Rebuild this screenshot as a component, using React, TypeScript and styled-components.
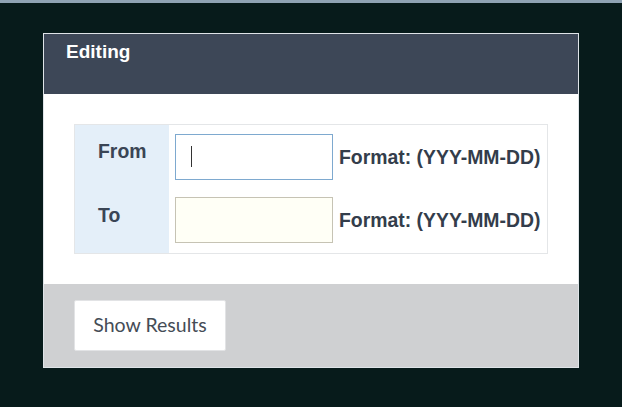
import React from "react";
import styled, { createGlobalStyle } from "styled-components";

const GlobalStyle = createGlobalStyle`
  html, body {
    margin: 0;
    padding: 0;
    background: #071b1b;
  }
  body {
    border-top: 3px solid #8fa3b4;
    min-height: 404px;
    font-family: "Liberation Sans", Arial, sans-serif;
  }
`;

const Page = styled.div`
  padding: 30px 43px 0 43px;
`;

const Panel = styled.div`
  width: 534px;
  border: 1px solid #dfe4e8;
  background: #ffffff;
`;

const Header = styled.div`
  height: 60px;
  box-sizing: border-box;
  padding: 6px 22px 0;
  background: #3d4757;
`;

const Title = styled.h2`
  margin: 0;
  font-size: 19px;
  line-height: 24px;
  font-weight: bold;
  color: #ffffff;
`;

const Body = styled.div`
  padding: 30px;
`;

const Table = styled.div`
  display: grid;
  grid-template-columns: 94px 1fr;
  border: 1px solid #e4e6e8;
`;

const LabelCell = styled.div<{ $top: number }>`
  background: #e4eff9;
  padding: ${(p) => p.$top}px 0 0 23px;
  height: 64px;
  box-sizing: border-box;
  font-family: "Liberation Sans", Arial, sans-serif;
  font-size: 19.4px;
  line-height: 22px;
  font-weight: bold;
  color: #3a4555;
`;

const FieldCell = styled.div<{ $top: number }>`
  display: flex;
  align-items: flex-start;
  gap: 6px;
  height: 64px;
  box-sizing: border-box;
  padding: ${(p) => p.$top}px 6px 0;
`;

const InputWrap = styled.span`
  position: relative;
  display: block;
`;

const DateInput = styled.input<{ $active?: boolean }>`
  display: block;
  width: 158px;
  height: 46px;
  box-sizing: border-box;
  margin: 0;
  padding: 0 15px;
  border: 1px solid ${(p) => (p.$active ? "#7ea9cf" : "#c6c3b4")};
  background: ${(p) => (p.$active ? "#ffffff" : "#fffff6")};
  outline: none;
  font-size: 16px;
  font-family: "Liberation Sans", Arial, sans-serif;
`;

const Caret = styled.span`
  position: absolute;
  left: 16px;
  top: 12px;
  width: 1px;
  height: 21px;
  background: #333333;
`;

const Hint = styled.span`
  font-family: "Liberation Sans", Arial, sans-serif;
  font-size: 19.4px;
  line-height: 46px;
  font-weight: bold;
  color: #333d4b;
  white-space: nowrap;
`;

const Footer = styled.div`
  background: #cfd0d2;
  padding: 16px 30px;
`;

const Button = styled.button`
  display: block;
  width: 152px;
  height: 51px;
  padding: 0 0 3px;
  border: 1px solid #e2e3e5;
  border-radius: 2px;
  background: #ffffff;
  color: #454c56;
  font-family: Lato, "Open Sans", sans-serif;
  font-size: 19.5px;
  cursor: pointer;
`;

const rows = [
  { label: "From", labelTop: 15, fieldTop: 9, active: true },
  { label: "To", labelTop: 15, fieldTop: 8, active: false },
];

export default function App() {
  return (
    <>
      <GlobalStyle />
      <Page>
        <Panel>
          <Header>
            <Title>Editing</Title>
          </Header>
          <Body>
            <Table>
              {rows.map((row) => (
                <React.Fragment key={row.label}>
                  <LabelCell $top={row.labelTop}>{row.label}</LabelCell>
                  <FieldCell $top={row.fieldTop}>
                    <InputWrap>
                      <DateInput type="text" $active={row.active} />
                      {row.active && <Caret />}
                    </InputWrap>
                    <Hint>Format: (YYY-MM-DD)</Hint>
                  </FieldCell>
                </React.Fragment>
              ))}
            </Table>
          </Body>
          <Footer>
            <Button>Show Results</Button>
          </Footer>
        </Panel>
      </Page>
    </>
  );
}
